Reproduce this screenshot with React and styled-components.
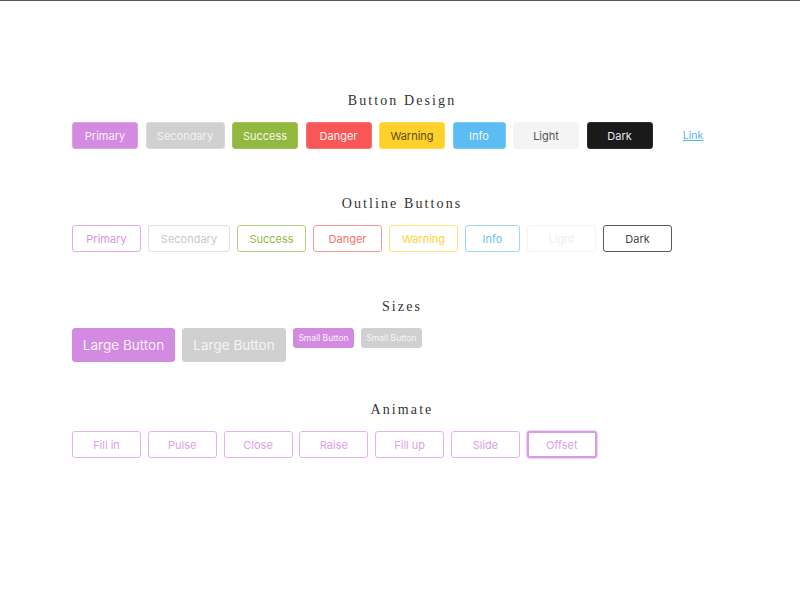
import React from "react";
import styled, { createGlobalStyle, css } from "styled-components";

const Global = createGlobalStyle`
  html, body { margin: 0; padding: 0; background: #fff; }
  body { border-top: 1px solid #555; }
  * { box-sizing: border-box; }
`;

const Page = styled.main`
  width: 800px;
  padding: 90px 68px 0 72px;
`;

const Sections = styled.div`
  display: grid;
  grid-auto-rows: 103px;
`;

const Section = styled.section`
  display: flex;
  flex-direction: column;
  gap: 11px;
`;

const Heading = styled.h2`
  margin: 0;
  height: 20px;
  line-height: 20px;
  text-align: center;
  font-family: "Liberation Serif", "Times New Roman", serif;
  font-weight: normal;
  font-size: 14px;
  letter-spacing: 2.1px;
  color: #333;
`;

const Row = styled.div`
  display: flex;
  align-items: flex-start;
  gap: ${(p) => p.$gap}px;
`;

const sizes = {
  md: css`height: 27px; font-size: 11px;`,
  lg: css`height: 34px; font-size: 13.5px;`,
  sm: css`height: 20px; font-size: 8.5px;`,
};

const Button = styled.button`
  flex: none;
  display: inline-flex;
  align-items: center;
  justify-content: center;
  width: ${(p) => p.$w}px;
  padding: 0;
  border-radius: 3px;
  font-family: "Inter", "Noto Sans", sans-serif;
  font-weight: 400;
  cursor: pointer;
  ${(p) => sizes[p.$size || "md"]}
  background: ${(p) => (p.$outline ? "#fff" : p.$bg)};
  border: ${(p) => p.$bw || 1}px solid ${(p) => p.$border};
  color: ${(p) => p.$fg};
  ${(p) => p.$shadow && css`box-shadow: 0 0 0 1px #f1d3f6;`}
`;

const LinkButton = styled.a`
  flex: none;
  display: inline-flex;
  align-items: center;
  justify-content: center;
  width: 66px;
  height: 27px;
  font-family: "Inter", "Noto Sans", sans-serif;
  font-size: 10.5px;
  color: #4fb6ee;
  text-decoration: underline;
  cursor: pointer;
`;

const solid = [
  { t: "Primary", w: 66, bg: "#d28be1", border: "#dc9fe8", fg: "#fbeffd" },
  { t: "Secondary", w: 79, bg: "#d0d0d0", border: "#d9d9d9", fg: "#f2f2f2" },
  { t: "Success", w: 66, bg: "#93b840", border: "#a3c35a", fg: "#f4f8ea" },
  { t: "Danger", w: 66, bg: "#f85657", border: "#fa7373", fg: "#fff0f0" },
  { t: "Warning", w: 66, bg: "#ffd12a", border: "#ffda4f", fg: "#5c4c14" },
  { t: "Info", w: 53, bg: "#5bbdf3", border: "#79c9f5", fg: "#f2f9fe" },
  { t: "Light", w: 66, bg: "#f4f4f4", border: "#f4f4f4", fg: "#555" },
  { t: "Dark", w: 66, bg: "#1a1a1a", border: "#2a2a2a", fg: "#e9e9e9" },
];

const outline = [
  { t: "Primary", w: 69, border: "#e3a8ef", fg: "#d896e3" },
  { t: "Secondary", w: 82, border: "#dedede", fg: "#c9c9c9" },
  { t: "Success", w: 69, border: "#b5d17f", fg: "#93b843" },
  { t: "Danger", w: 69, border: "#f99797", fg: "#f76f6f" },
  { t: "Warning", w: 69, border: "#ffe27c", fg: "#ffd338" },
  { t: "Info", w: 55, border: "#9dd6f6", fg: "#6cc3f3" },
  { t: "Light", w: 69, border: "#f3f3f3", fg: "#eeeeee" },
  { t: "Dark", w: 69, border: "#5a5a5a", fg: "#484848" },
];

const animate = ["Fill in", "Pulse", "Close", "Raise", "Fill up", "Slide"];

export default function App() {
  return (
    <>
      <Global />
      <Page>
        <Sections>
          <Section>
            <Heading>Button Design</Heading>
            <Row $gap={7.5}>
              {solid.map((b) => (
                <Button key={b.t} $w={b.w} $bg={b.bg} $border={b.border} $fg={b.fg}>
                  {b.t}
                </Button>
              ))}
              <LinkButton>Link</LinkButton>
            </Row>
          </Section>
          <Section>
            <Heading>Outline Buttons</Heading>
            <Row $gap={7}>
              {outline.map((b) => (
                <Button key={b.t} $outline $w={b.w} $border={b.border} $fg={b.fg}>
                  {b.t}
                </Button>
              ))}
            </Row>
          </Section>
          <Section>
            <Heading>Sizes</Heading>
            <Row $gap={7}>
              <Button $size="lg" $w={103} $bg="#d28be1" $border="#d28be1" $fg="#fbeffd">
                Large Button
              </Button>
              <Button $size="lg" $w={104} $bg="#d0d0d0" $border="#d0d0d0" $fg="#f4f4f4">
                Large Button
              </Button>
              <Button $size="sm" $w={61} $bg="#d28be1" $border="#d28be1" $fg="#fbeffd">
                Small Button
              </Button>
              <Button $size="sm" $w={61} $bg="#d0d0d0" $border="#d0d0d0" $fg="#f4f4f4">
                Small Button
              </Button>
            </Row>
          </Section>
          <Section>
            <Heading>Animate</Heading>
            <Row $gap={6.8}>
              {animate.map((t) => (
                <Button key={t} $outline $w={69} $border="#e6b0f0" $fg="#dea0ea">
                  {t}
                </Button>
              ))}
              <Button $outline $shadow $bw={2} $w={70} $border="#d99be6" $fg="#dea0ea">
                Offset
              </Button>
            </Row>
          </Section>
        </Sections>
      </Page>
    </>
  );
}
